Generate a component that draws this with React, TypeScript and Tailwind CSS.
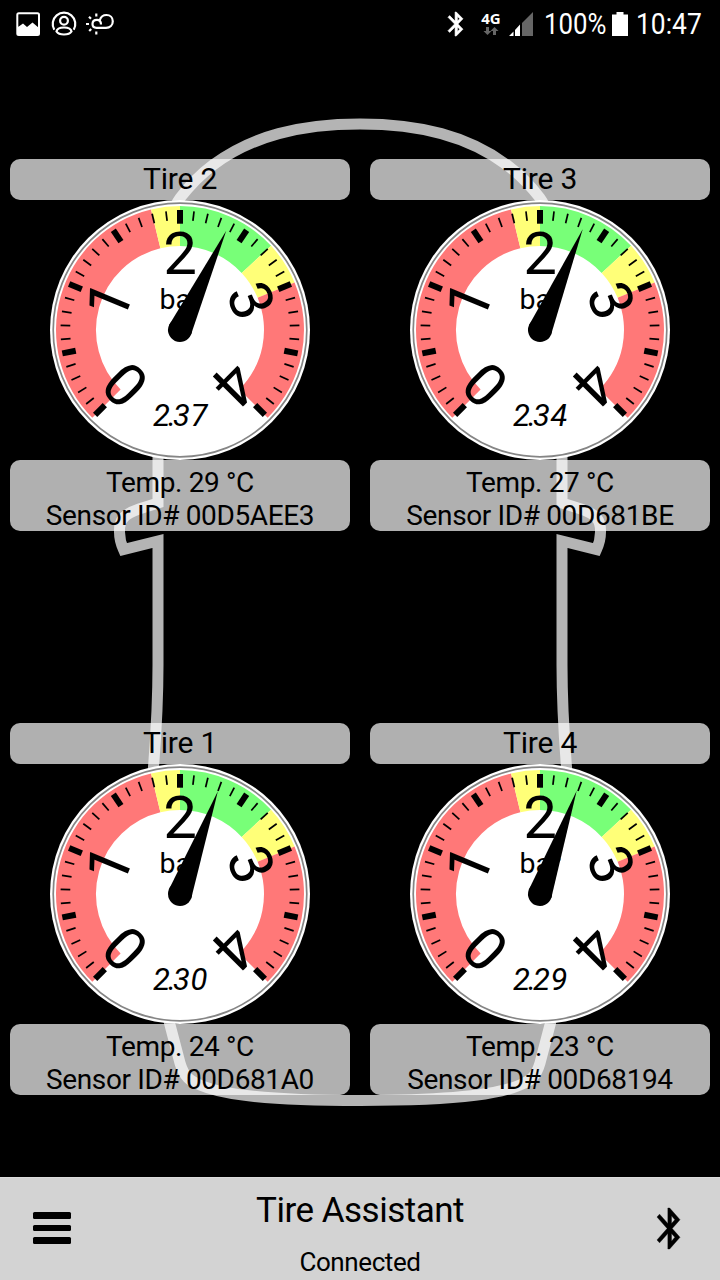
import React from "react";

type Tire = { name: string; pressure: number; temp: number; sensor: string };

const FRONT: Tire[] = [
  { name: "Tire 2", pressure: 2.37, temp: 29, sensor: "00D5AEE3" },
  { name: "Tire 3", pressure: 2.34, temp: 27, sensor: "00D681BE" },
];

const REAR: Tire[] = [
  { name: "Tire 1", pressure: 2.3, temp: 24, sensor: "00D681A0" },
  { name: "Tire 4", pressure: 2.29, temp: 23, sensor: "00D68194" },
];

const BANDS = [
  { from: 0, to: 1.8, color: "#ff7878" },
  { from: 1.8, to: 2, color: "#ffff78" },
  { from: 2, to: 2.7, color: "#78ff78" },
  { from: 2.7, to: 3, color: "#ffff78" },
  { from: 3, to: 4, color: "#ff7878" },
];

const toAngle = (value: number) => value * 67.5 - 135;

function polar(radius: number, angle: number) {
  const rad = (angle * Math.PI) / 180;
  return `${(radius * Math.sin(rad)).toFixed(2)} ${(-radius * Math.cos(rad)).toFixed(2)}`;
}

function bandPath(from: number, to: number) {
  const a = toAngle(from);
  const b = toAngle(to);
  const large = b - a > 180 ? 1 : 0;
  return `M${polar(124, a)}A124 124 0 ${large} 1 ${polar(124, b)}L${polar(84, b)}A84 84 0 ${large} 0 ${polar(84, a)}Z`;
}

function Gauge({ value }: { value: number }) {
  const ticks = Array.from({ length: 41 }, (_, i) => i);
  return (
    <svg className="block h-[260px] w-[260px]" viewBox="-130 -130 260 260">
      <circle r="130" fill="#fff" />
      <circle r="126.8" fill="none" stroke="#858585" strokeWidth="1.7" />
      {BANDS.map((b) => (
        <path key={b.from} d={bandPath(b.from, b.to)} fill={b.color} />
      ))}
      {ticks.map((i) => {
        const major = i % 5 === 0;
        return (
          <line
            key={i}
            x1="0"
            x2="0"
            y1={major ? -120 : -119.5}
            y2={major ? -106.3 : -109.8}
            stroke="#000"
            strokeWidth={major ? 6 : 1.7}
            transform={`rotate(${toAngle(i / 10)})`}
          />
        );
      })}
      <g fontFamily="Roboto, sans-serif" textAnchor="middle" fill="#000">
        {[0, 1, 2, 3, 4].map((n) => (
          <text key={n} y="-56" fontSize="60" transform={`rotate(${toAngle(n)})`}>
            {n}
          </text>
        ))}
        <text y="-21" fontSize="28.5">
          bar
        </text>
      </g>
      <text
        x="-27 -12 -7 10.5"
        y="96"
        fontFamily="Roboto, sans-serif"
        fontStyle="italic"
        fontWeight="400"
        fontSize="31"
        fill="#000"
      >
        {value.toFixed(2)}
      </text>
      <g transform={`rotate(${toAngle(value)})`}>
        <circle r="12" />
        <path d="M-12 0L0 -109.5L12 0Z" />
      </g>
    </svg>
  );
}

function TireTile({ tire }: { tire: Tire }) {
  return (
    <section className="flex w-[340px] flex-col items-center">
      <h2 className="h-[41px] w-full rounded-[10px] bg-white/69 text-center text-[30px] leading-[39px] tracking-[-0.2px]">
        {tire.name}
      </h2>
      <Gauge value={tire.pressure} />
      <div className="h-[71px] w-full rounded-[10px] bg-white/69 pt-[6px] text-center text-[28px] leading-[33px] tracking-[-0.37px] whitespace-nowrap">
        <p>Temp. {tire.temp} °C</p>
        <p>Sensor ID# {tire.sensor}</p>
      </div>
    </section>
  );
}

const BODY_SIDE =
  "M360 124C300 124 252 136 213 165C201 174 190 185 180 198C160 225 158 300 158 380V503L139 509C124 514 119 520 119.500 532C119.500 539 121 544 123.500 549.500L158 541V665C158 700 156 735 153.500 767C150 820 154 940 169.500 1023L180 1063C184 1077 190 1081 200 1085C216 1092 250 1100.500 360 1100.500";

function CarOutline() {
  return (
    <svg className="absolute inset-0 h-[1280px] w-[720px]" viewBox="0 0 720 1280" fill="none" stroke="#b4b4b4" strokeWidth="11">
      <path d={BODY_SIDE} />
      <path d={BODY_SIDE} transform="matrix(-1 0 0 1 720 0)" />
    </svg>
  );
}

function BluetoothIcon({ className, weight }: { className: string; weight: number }) {
  return (
    <svg
      className={className}
      viewBox="5 2 12.71 20"
      preserveAspectRatio="none"
      fill="currentColor"
      stroke="currentColor"
      strokeWidth={weight}
      overflow="visible"
    >
      <path d="M17.71 7.71L12 2h-1v7.590L6.410 5 5 6.410 10.590 12 5 17.590 6.410 19 11 14.410V22h1l5.710-5.710-4.300-4.290 4.300-4.290zM13 5.830l1.880 1.880L13 9.590V5.830zm1.880 10.460L13 18.170v-3.760l1.880 1.880z" />
    </svg>
  );
}

function StatusBar() {
  return (
    <header className="relative flex h-12 items-center justify-between pr-[17px] pl-4 text-white">
      <div className="flex items-center">
        <svg className="h-6 w-6" viewBox="0 0 24 24">
          <rect x="1.300" y="1.300" width="21.700" height="21.700" rx="1.500" fill="none" stroke="currentColor" strokeWidth="2" />
          <path d="M1 15.500L3.500 14L7 11.500L11 15L16.500 10.500L23 16V23H1Z" fill="currentColor" />
        </svg>
        <svg className="ml-[11px] h-[26px] w-[26px]" viewBox="0 0 26 26" fill="none" stroke="currentColor" strokeWidth="2.200">
          <path d="M3.300 18.800A11.300 11.300 0 1 1 22.700 18.800" />
          <circle cx="13" cy="9.800" r="3.900" />
          <path d="M5.500 20.500C6 17.500 10 16.500 13 16.500S20 17.500 20.500 20.500C18 24.500 8 24.500 5.500 20.500Z" />
        </svg>
        <svg className="ml-[7px] h-7 w-8" viewBox="84 10 32 28" fill="none" stroke="currentColor" strokeWidth="2.200">
          <path d="M101 24.500C101 21.500 99.500 19.800 97 19.800C94.300 19.800 92.500 21.500 92.500 24C92.500 26.200 94 27.800 96.500 27.800H106C110 27.800 112.800 25 112.800 21.300C112.800 17.500 110 15 106.500 15C103 15 100.800 16.800 99.800 20" />
          <path d="M96.300 13.500V16.500M89 16.800L91 18.800M86 24H89M89.200 31L91.200 29M96.300 31.500V34.500" />
        </svg>
      </div>
      <div className="flex h-12 items-center">
        <BluetoothIcon className="mr-[17px] h-[24px] w-[15px]" weight={0.5} />
        <div className="mr-[7px] mb-[2px] flex w-[22px] flex-col items-center gap-[2px]">
          <span className="font-['Open_Sans',sans-serif] text-[15px] leading-[14px] font-bold">4G</span>
          <svg className="h-2 w-4" viewBox="0 0 16 8" fill="#666">
            <path d="M3 0H6V4H8.500L4.500 8L.5 4H3ZM10 8H13V4H15.500L11.500 0L7.500 4H10Z" />
          </svg>
        </div>
        <svg className="mr-[11px] h-6 w-6" viewBox="0 0 24 24">
          <path d="M24 0V24H13V11Z" fill="#666" />
          <path d="M11 12.500V24H6V18ZM4.500 19.500V24H0Z" fill="#fff" />
        </svg>
        <div className="w-[68px]">
          <span className="inline-block origin-left scale-x-[0.86] text-[30px] leading-[50px]">100%</span>
        </div>
        <svg className="mr-[8px] h-6 w-4" viewBox="0 0 16 24" fill="#fff">
          <path d="M4.500 0H11.500V2.500H16V24H0V2.500H4.500Z" />
        </svg>
        <div className="w-[67px]">
          <span className="inline-block origin-left scale-x-[0.88] text-[30px] leading-[50px]">10:47</span>
        </div>
      </div>
    </header>
  );
}

export default function App() {
  return (
    <div className="relative flex h-[1280px] w-[720px] flex-col overflow-hidden bg-black font-[Roboto,sans-serif] text-black">
      <CarOutline />
      <StatusBar />
      <main className="relative flex flex-1 flex-col gap-[192px] px-[10px] pt-[111px]">
        <div className="flex gap-5">
          {FRONT.map((t) => (
            <TireTile key={t.name} tire={t} />
          ))}
        </div>
        <div className="flex gap-5">
          {REAR.map((t) => (
            <TireTile key={t.name} tire={t} />
          ))}
        </div>
      </main>
      <footer className="relative grid h-[103px] grid-cols-3 items-center border-t border-[#dcdcdc] bg-[#d3d3d3] pr-[40px] pl-[33px]">
        <button className="mb-[2px] flex w-[38px] flex-col gap-[6px]" aria-label="Menu">
          <span className="h-[6.5px] rounded-[1.5px] bg-black" />
          <span className="h-[6.5px] rounded-[1.5px] bg-black" />
          <span className="h-[6.5px] rounded-[1.5px] bg-black" />
        </button>
        <div className="ml-[7px] flex h-full flex-col items-center pt-[12px]">
          <h1 className="text-[35px] leading-[42px] tracking-[-0.5px] whitespace-nowrap">Tire Assistant</h1>
          <p className="mt-[15px] text-[26px] leading-[30px] tracking-[-0.4px]">Connected</p>
        </div>
        <BluetoothIcon className="mb-[2px] h-[41px] w-[23px] justify-self-end" weight={0.2} />
      </footer>
    </div>
  );
}
